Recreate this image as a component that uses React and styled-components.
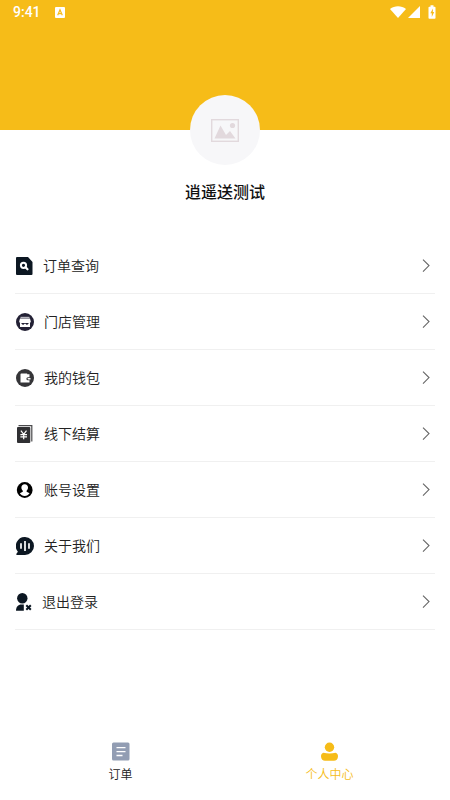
import { useState } from "react";
import styled, { createGlobalStyle } from "styled-components";

const GlobalStyle = createGlobalStyle`
  * {
    box-sizing: border-box;
  }
  body {
    margin: 0;
    background-color: #fff;
    font-family: Roboto, "Noto Sans CJK SC", sans-serif;
    color: #222;
  }
`;

const Page = styled.div`
  display: flex;
  flex-direction: column;
  min-height: 100vh;
`;
const Header = styled.header`
  height: 130px;
  background-color: #f6bc18;
`;
const StatusBar = styled.div`
  display: flex;
  align-items: center;
  justify-content: space-between;
  height: 24px;
  padding: 0 14px 0 13px;
  color: #fff;
`;
const StatusGroup = styled.div`
  display: flex;
  align-items: center;
  gap: ${({ $gap }) => $gap}px;
`;
const Time = styled.span`
  font-size: 14px;
  font-weight: 500;
  line-height: 24px;
`;
const Profile = styled.section`
  display: flex;
  flex-direction: column;
  align-items: center;
  margin-top: -35px;
`;
const Avatar = styled.div`
  display: flex;
  align-items: center;
  justify-content: center;
  width: 70px;
  height: 70px;
  border-radius: 50%;
  background-color: #f7f7f9;
`;
const Name = styled.h1`
  margin: 16px 0 0;
  font-size: 16px;
  font-weight: 500;
  line-height: 24px;
  color: #111;
`;
const Menu = styled.nav`
  flex: 1;
  padding: 33px 15px 0;
`;
const MenuItem = styled.button`
  display: flex;
  align-items: center;
  gap: 10px;
  width: 100%;
  height: 56px;
  padding: 0 0 0 1px;
  border: 0;
  border-bottom: 1px solid #f0f0f0;
  background: none;
  font: inherit;
  color: inherit;
  text-align: left;
`;
const MenuText = styled.span`
  flex: 1;
  font-size: 14px;
  font-weight: 350;
  line-height: 20px;
`;
const Arrow = styled.svg`
  width: 8px;
  height: 14px;
  margin-right: 5px;
`;
const TabBar = styled.nav`
  display: flex;
  height: 70px;
  padding: 0 16px;
`;
const Tab = styled.button`
  display: flex;
  flex: 1;
  flex-direction: column;
  align-items: center;
  gap: 4px;
  padding: 12px 0 0;
  border: 0;
  background: none;
  font: inherit;
  font-size: 12px;
  font-weight: 350;
  line-height: 20px;
  color: ${({ $active }) => ($active ? "#f6bc18" : "#222")};
`;

const icons = {
  search: (
    <svg width="17" height="18" viewBox="0 0 17 18">
      <path d="M1 0h11l4.500 5v12a1 1 0 0 1-1 1H1a1 1 0 0 1-1-1V1a1 1 0 0 1 1-1z" fill="#0c1722" />
      <circle cx="7.500" cy="8.300" r="2.600" fill="none" stroke="#fff" strokeWidth="2" />
      <path d="M9.500 10.300l2 2" stroke="#fff" strokeWidth="2.200" strokeLinecap="round" />
    </svg>
  ),
  shop: (
    <svg width="18" height="18" viewBox="0 0 18 18">
      <circle cx="9" cy="9" r="9" fill="#232135" />
      <path d="M4.500 3.800h9v1.300h-9z" fill="#b9b8c0" />
      <path d="M4 5.600h10l.8 2.900c0 .9-.6 1.400-1.300 1.400h-9c-.7 0-1.300-.5-1.300-1.400z" fill="#fff" />
      <path d="M4 9.500v4.500h10V9.500h-1.200v.8l-1.800 1.700-2-1.400-2 1.400-1.800-1.700v-.8z" fill="#fff" />
    </svg>
  ),
  wallet: (
    <svg width="18" height="18" viewBox="0 0 18 18">
      <circle cx="9" cy="9" r="9" fill="#353538" />
      <path d="M5.300 4.400h5.900v.8h2.300v3.100h-1.600a1.500 1.500 0 0 0 0 3h1.600v2.200h-9V5.200c0-.5.300-.8.800-.8z" fill="#fff" />
      <path d="M12.300 9h2.200v1.600h-2.200a.8.800 0 0 1 0-1.600z" fill="#fff" />
    </svg>
  ),
  settle: (
    <svg width="18" height="18" viewBox="0 0 18 18">
      <path d="M2.500.6h13.300v15.900" fill="none" stroke="#4a4a4d" strokeWidth="1.200" />
      <rect x="1" y="2" width="13.300" height="16" rx="1" fill="#303033" />
      <path d="M4.900 5.600l2.800 3.700 2.800-3.700M7.700 9.300v5M4.400 9.600h6.600M4.400 11.900h6.600" fill="none" stroke="#fff" strokeWidth="1.200" />
    </svg>
  ),
  account: (
    <svg width="18" height="18" viewBox="0 0 18 18">
      <circle cx="8.700" cy="9" r="7.900" fill="#000" />
      <path d="M8.700 3.300c2.100 0 3.300 1.400 3.300 3.300 0 1.300-.5 2.500-1.400 3.200v1l3 1.400c-1 1.600-2.800 2.700-4.900 2.700s-3.900-1.100-4.900-2.700l3-1.400v-1c-.9-.7-1.400-1.900-1.400-3.200 0-1.900 1.200-3.300 3.300-3.300z" fill="#fff" />
    </svg>
  ),
  about: (
    <svg width="18" height="18" viewBox="0 0 18 18">
      <path d="M9 0a9 9 0 1 1 0 18H.4v-1.300l1.500-2A9 9 0 0 1 9 0z" fill="#0c1722" />
      <path d="M5 6.300v5.400M9 4v10M13 6.300v5.400" stroke="#fff" strokeWidth="1.700" />
    </svg>
  ),
  logout: (
    <svg width="16" height="18" viewBox="0 0 16 18">
      <circle cx="6.300" cy="5.200" r="5.200" fill="#0c1722" />
      <path d="M0 17.700c0-4 2-6.300 5.500-6.300h2.300v6.300z" fill="#0c1722" />
      <path d="M10.300 12.300l4.500 4.500M14.800 12.300l-4.500 4.500" stroke="#0c1722" strokeWidth="2" />
    </svg>
  ),
};

const menu = [
  { icon: "search", text: "订单查询" },
  { icon: "shop", text: "门店管理" },
  { icon: "wallet", text: "我的钱包" },
  { icon: "settle", text: "线下结算" },
  { icon: "account", text: "账号设置" },
  { icon: "about", text: "关于我们" },
  { icon: "logout", text: "退出登录" },
];

function Status() {
  return (
    <StatusBar>
      <StatusGroup $gap={14}>
        <Time>9:41</Time>
        <svg width="10" height="11" viewBox="0 0 10 11">
          <rect width="10" height="11" rx="1" fill="#fff" />
          <path d="M2.700 8.200L5 2.800l2.300 5.400M3.500 6.700h3" fill="none" stroke="#f6bc18" strokeWidth="1.200" />
        </svg>
      </StatusGroup>
      <StatusGroup $gap={2}>
        <svg width="16" height="12" viewBox="0 0 16 12">
          <path d="M0 3C4.500-.8 11.500-.8 16 3L8 12z" fill="#fff" />
        </svg>
        <svg width="12" height="12" viewBox="0 0 12 12">
          <path d="M12 0v12H0z" fill="#fff" />
        </svg>
        <svg width="14" height="14" viewBox="0 0 14 14">
          <path d="M8.500.3h3v1.400h1.200c.5 0 .8.3.8.800v10.400c0 .5-.3.800-.8.800H7.300c-.5 0-.8-.3-.8-.8V2.500c0-.5.3-.8.800-.8h1.200z" fill="#fff" />
          <path d="M11 3.500L8.300 8.200h1.500v3.800l2.400-4.900h-1.400z" fill="#f6bc18" />
        </svg>
      </StatusGroup>
    </StatusBar>
  );
}

export default function App() {
  const [tab, setTab] = useState("me");
  return (
    <>
      <GlobalStyle />
      <Page>
        <Header>
          <Status />
        </Header>
        <Profile>
          <Avatar>
            <svg width="28" height="23" viewBox="0 0 28 23">
              <rect x=".7" y=".7" width="26.600" height="21.600" fill="none" stroke="#e2d9dd" strokeWidth="1.400" />
              <circle cx="21.500" cy="6.500" r="2.600" fill="#e2d9dd" />
              <path d="M3.500 19.500L9.500 6.500l5.500 9.500 4-4 5.500 7.500z" fill="#e2d9dd" />
            </svg>
          </Avatar>
          <Name>逍遥送测试</Name>
        </Profile>
        <Menu>
          {menu.map((m) => (
            <MenuItem key={m.icon} type="button">
              {icons[m.icon]}
              <MenuText>{m.text}</MenuText>
              <Arrow viewBox="0 0 8 14">
                <path d="M1 .6l6 6-6 6" fill="none" stroke="#666" strokeWidth="1.100" />
              </Arrow>
            </MenuItem>
          ))}
        </Menu>
        <TabBar>
          <Tab type="button" onClick={() => setTab("order")} $active={tab === "order"}>
            <svg width="18" height="19" viewBox="0 0 18 19">
              <rect y=".5" width="17.500" height="18" rx="1.500" fill="#929db3" />
              <path d="M4.500 5.700h9M4.500 9.600h9M4.500 13.500h6" stroke="#fff" strokeWidth="1.300" />
            </svg>
            订单
          </Tab>
          <Tab type="button" onClick={() => setTab("me")} $active={tab === "me"}>
            <svg width="18" height="19" viewBox="0 0 18 19">
              <circle cx="8.500" cy="5.200" r="4.700" fill="#f6bc18" />
              <path d="M2.500 10.700c3.500 1.100 8.500 1.100 12 0 1.600.6 2.500 1.800 2.500 3.500 0 3.200-2 4.500-4 4.500H4c-2 0-4-1.300-4-4.500 0-1.700.9-2.900 2.500-3.500z" fill="#f6bc18" />
            </svg>
            个人中心
          </Tab>
        </TabBar>
      </Page>
    </>
  );
}
